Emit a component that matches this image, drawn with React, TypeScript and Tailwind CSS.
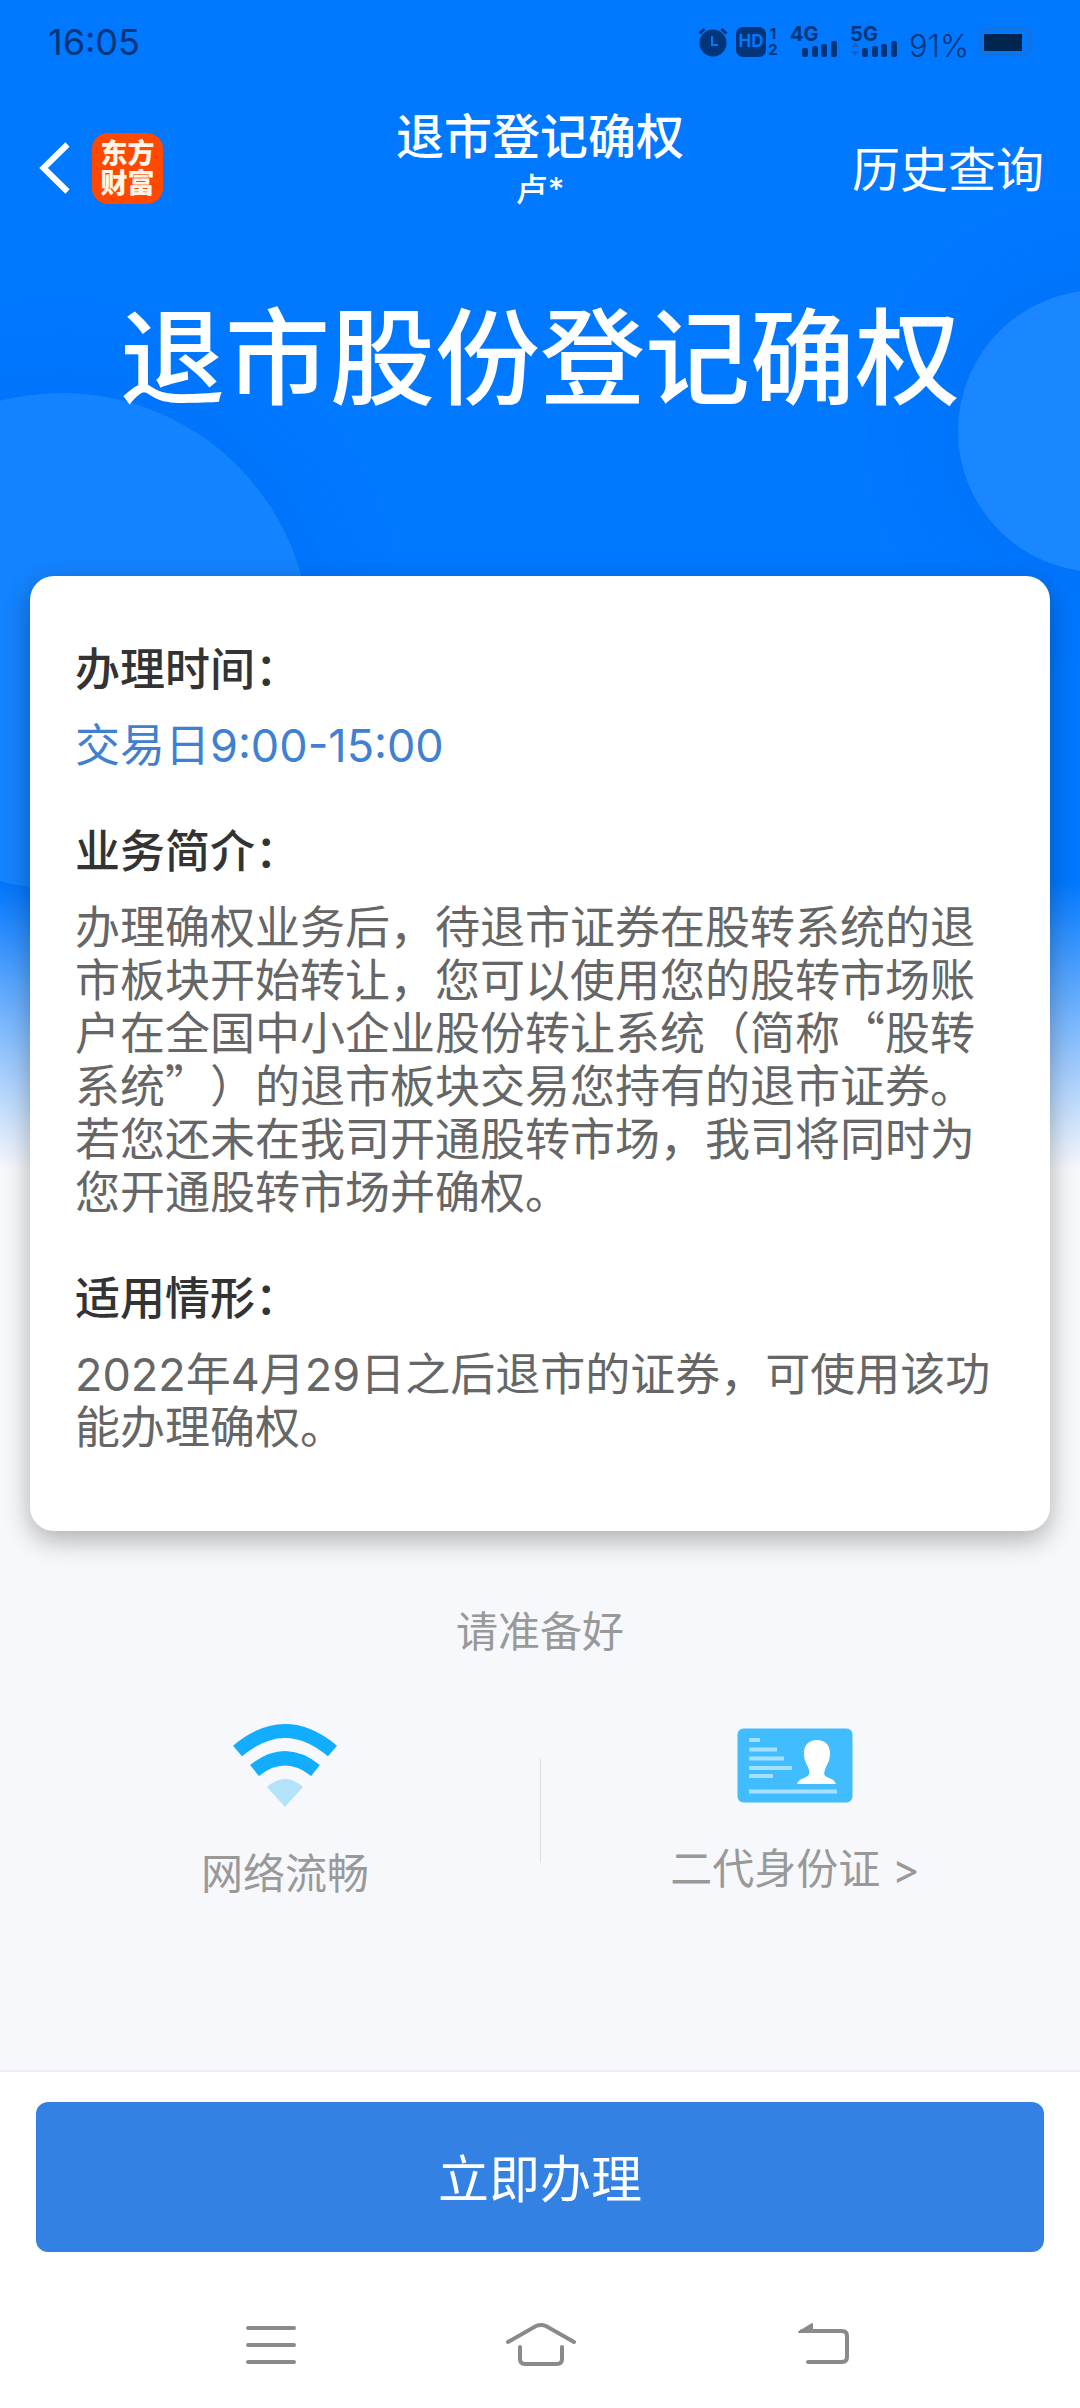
import type { ReactNode } from 'react';

interface SectionProps {
  title: string;
  children: ReactNode;
}

function Section({ title, children }: SectionProps) {
  return (
    <section>
      <h2 className="font-medium text-[#333]">{title}</h2>
      <p className="mt-[23px] text-[#666]">{children}</p>
    </section>
  );
}

function SignalBars() {
  return (
    <svg className="h-4 w-9" viewBox="0 0 36 16" fill="currentColor">
      <rect x="0" y="7" width="6" height="9" rx="2" />
      <rect x="10" y="5" width="6" height="11" rx="2" />
      <rect x="19" y="3" width="6" height="13" rx="2" />
      <rect x="29" y="0" width="6" height="16" rx="2" />
    </svg>
  );
}

function Signal({ label, data }: { label: string; data?: boolean }) {
  return (
    <div className="flex flex-col">
      <span className="h-[14px] text-[20px] leading-[14px] font-bold">{label}</span>
      <div className="flex items-end">
        <svg className="h-4 w-3" viewBox="0 0 12 16" fill="#1a5fc0">
          {data && (
            <>
              <path d="M5 1l4 5H1z" />
              <path d="M5 15l4-5H1z" />
            </>
          )}
        </svg>
        <SignalBars />
      </div>
    </div>
  );
}

function StatusBar() {
  return (
    <div className="flex h-21 items-center justify-between pr-[47px] pl-12 text-[#00357a]">
      <span className="text-[36px]">16:05</span>
      <div className="flex items-center">
        <svg className="h-[30px] w-[30px]" viewBox="0 0 30 30" fill="none">
          <circle cx="15" cy="16" r="13.5" fill="currentColor" />
          <path d="M1.500 6.500l5-4.500M28.500 6.500l-5-4.500" stroke="currentColor" strokeWidth="3" />
          <path d="M14 9v9h6" stroke="#0078ff" strokeWidth="2" />
        </svg>
        <span className="ml-2 flex h-[30px] w-[30px] items-center justify-center rounded-[7px] bg-[#00357a] text-[17px] font-bold text-[#0078ff]">
          HD
        </span>
        <span className="ml-[2px] flex h-8 w-[10px] flex-col items-center text-[15px] leading-4 font-bold">
          <span>1</span>
          <span>2</span>
        </span>
        <div className="ml-3">
          <Signal label="4G" />
        </div>
        <div className="ml-3">
          <Signal label="5G" data />
        </div>
        <span className="ml-[11px] pt-2 text-[31px] leading-[30px] font-light">91%</span>
        <svg className="ml-[10px] h-7 w-[54px]" viewBox="0 0 54 28" fill="none">
          <rect x="1" y="1" width="50" height="26" rx="7" stroke="#1f6fd0" strokeWidth="2" />
          <rect x="5" y="6" width="38" height="17" fill="#00264f" />
          <path d="M52 9c2 2 2 8 0 10z" fill="#1f6fd0" />
        </svg>
      </div>
    </div>
  );
}

function Header() {
  return (
    <header className="grid grid-cols-3 items-center px-9 text-white">
      <div className="flex items-center">
        <button type="button" aria-label="返回" className="pr-[20px]">
          <svg className="h-[54px] w-9" viewBox="0 0 36 54" fill="none">
            <path d="M31.500 3.500L7.500 27l24 23.500" stroke="currentColor" strokeWidth="6" />
          </svg>
        </button>
        <div className="flex h-[71px] w-[71px] flex-col items-center justify-center rounded-2xl bg-[#ff4800] pt-[2px] text-[27px] leading-[30px] font-black text-[#fff6ea]">
          <span>东方</span>
          <span>财富</span>
        </div>
      </div>
      <div className="pb-4 text-center font-medium">
        <h1 className="text-[48px] leading-[60px]">退市登记确权</h1>
        <p className="text-[32px] leading-[46px]">卢*</p>
      </div>
      <a href="#history" className="pt-1 text-right text-[48px]">
        历史查询
      </a>
    </header>
  );
}

function WifiIcon() {
  return (
    <svg className="h-[84px] w-[104px]" viewBox="0 0 104 84" fill="none">
      <path d="M4.500 27Q52-13 99.500 27" stroke="#12adff" strokeWidth="14" />
      <path d="M21.500 46.500Q52 22 82.500 46.500" stroke="#12adff" strokeWidth="14" />
      <path d="M34 63Q52 47 70 63L52 83z" fill="#b3e3fa" />
    </svg>
  );
}

function IdCardIcon() {
  return (
    <svg className="h-[75px] w-[116px]" viewBox="0 0 116 75" fill="none">
      <rect x=".5" y=".5" width="115" height="74" rx="6" fill="#40bcff" />
      <path
        d="M12 12h11M12 21.500h28M12 30.500h35M12 40h43M12 48h24M12 63.500h88"
        stroke="#a4e0ff"
        strokeWidth="4"
      />
      <path
        d="M80 12c8 0 13 5 13 13 0 7-2 10-4 14-2 5-3 8 1 10 4 2 8 3 9 7H60c1-4 5-5 9-7 4-2 4-5 2-10-2-4-4-7-4-14 0-8 5-13 13-13z"
        fill="#fff"
      />
    </svg>
  );
}

function NavBar() {
  return (
    <nav className="mx-auto grid w-3/4 grid-cols-3 justify-items-center text-[#8a8a8a]">
      <button type="button" aria-label="菜单">
        <svg className="h-14 w-20" viewBox="0 0 80 56" fill="none">
          <path
            d="M18 11h46M18 28h46M18 45h46"
            stroke="currentColor"
            strokeWidth="4"
            strokeLinecap="round"
          />
        </svg>
      </button>
      <button type="button" aria-label="主页">
        <svg className="h-14 w-20" viewBox="0 0 80 56" fill="none">
          <path
            d="M8 25L36 9q5-2 10 0l28 16M20 30v12q0 5 5 5h32q5 0 5-5V30"
            stroke="currentColor"
            strokeWidth="4"
            strokeLinecap="round"
          />
        </svg>
      </button>
      <button type="button" aria-label="后退">
        <svg className="h-14 w-20" viewBox="0 0 80 56" fill="none">
          <path
            d="M32 14h40q5 0 5 5v21q0 5-5 5H38"
            stroke="currentColor"
            strokeWidth="4"
            strokeLinecap="round"
          />
          <path
            d="M29 15l13-8v8z"
            fill="currentColor"
            stroke="currentColor"
            strokeWidth="2"
            strokeLinejoin="round"
          />
        </svg>
      </button>
    </nav>
  );
}

export default function App() {
  return (
    <div
      lang="zh-CN"
      className='relative flex min-h-screen flex-col overflow-hidden bg-[#f7f8fb] bg-[linear-gradient(#0078ff_880px,#f7f8fb_1170px)] font-[Inter,"Noto_Sans_CJK_SC",sans-serif] [text-spacing-trim:space-all]'
    >
      {/* Decorative circles behind the content */}
      <div className="absolute top-[393px] -left-[186px] h-[496px] w-[496px] rounded-full bg-[#1483ff] shadow-[0_0_90px_rgba(0,90,220,0.25)]" />
      <div className="absolute top-[290px] -right-[160px] h-[282px] w-[282px] rounded-full bg-[#1a86ff] shadow-[0_0_90px_rgba(0,90,220,0.25)]" />

      <div className="relative">
        <StatusBar />
        <div className="pt-[23px]">
          <Header />
        </div>

        <div className="pt-[53px] text-center text-[105px] leading-[152px] font-medium text-white">
          退市股份登记确权
        </div>

        <main className="mx-[30px] mt-[142px] flex flex-col gap-[53px] rounded-3xl bg-white px-[45px] pt-[67px] pb-[77px] text-[45px] leading-[53px] shadow-[0_9px_27px_rgba(0,0,0,0.3)]">
          <Section title="办理时间：">
            <span className="text-[#4080d0]">交易日9:00-15:00</span>
          </Section>
          <Section title="业务简介：">
            办理确权业务后，待退市证券在股转系统的退市板块开始转让，您可以使用您的股转市场账户在全国中小企业股份转让系统（简称
            {/* Full-width quotes need the CJK face */}
            <span className='font-["Noto_Sans_CJK_SC",sans-serif] leading-none'>“股转系统”</span>
            ）的退市板块交易您持有的退市证券。若您还未在我司开通股转市场，我司将同时为您开通股转市场并确权。
          </Section>
          <Section title="适用情形：">
            2022年4月29日之后退市的证券，可使用该功能办理确权。
          </Section>
        </main>

        {/* Things to prepare */}
        <div className="mx-[30px] mt-[71px] text-[42px] leading-[60px] text-[#999]">
          <p className="text-center">请准备好</p>
          <div className="mt-[62px] grid grid-cols-2 items-start">
            <div className="flex flex-col items-center gap-9">
              <WifiIcon />
              <span>网络流畅</span>
            </div>
            <div className="relative flex flex-col items-center gap-9 pt-1">
              <div className="absolute top-[35px] left-0 h-[104px] w-px bg-[#ddd]" />
              <IdCardIcon />
              <a href="#id-card">二代身份证 &gt;</a>
            </div>
          </div>
        </div>
      </div>

      <footer className="relative mt-auto border-t-2 border-[#eceef0] bg-white px-9 pt-[30px] pb-[35px]">
        <button
          type="button"
          className="h-[150px] w-full rounded-xl bg-[#3381e3] pt-[6px] text-[51px] text-white"
        >
          立即办理
        </button>
        <div className="-mx-9 mt-[65px]">
          <NavBar />
        </div>
      </footer>
    </div>
  );
}
